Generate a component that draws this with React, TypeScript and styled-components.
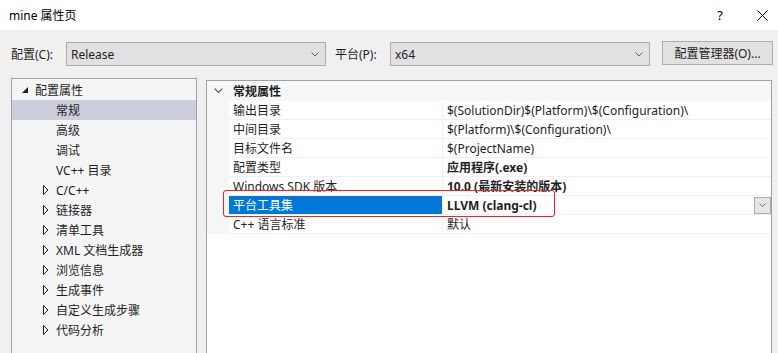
import styled, { createGlobalStyle } from "styled-components";

const GlobalStyle = createGlobalStyle`
  html, body {
    margin: 0;
    padding: 0;
    background: #f0f0f0;
  }
  * {
    box-sizing: border-box;
  }
`;

const FONT = `"Segoe UI", "Noto Sans", "Noto Sans CJK SC", sans-serif`;

const Window = styled.div`
  width: 778px;
  height: 353px;
  overflow: hidden;
  background: #f0f0f0;
  font-family: ${FONT};
  font-size: 12px;
  color: #1e1e1e;
  display: flex;
  flex-direction: column;
`;

const TitleBar = styled.div`
  height: 30px;
  flex-shrink: 0;
  background: #ffffff;
  display: flex;
  align-items: center;
  justify-content: space-between;
  padding: 0 10px 0 9px;
  font-size: 12px;
  color: #000;
`;

const TitleButtons = styled.div`
  display: flex;
  align-items: center;
  gap: 34px;
  height: 100%;
`;

const TitleButton = styled.div`
  height: 100%;
  display: flex;
  align-items: center;
  justify-content: center;
  font-size: 13px;
  color: #000;
`;

const Toolbar = styled.div`
  display: flex;
  align-items: center;
  height: 24px;
  margin-top: 12px;
  padding-left: 11px;
`;

const FieldLabel = styled.span<{ $width: number }>`
  width: ${(p) => p.$width}px;
  flex-shrink: 0;
`;

const Combo = styled.div<{ $gap?: number }>`
  width: 260px;
  height: 24px;
  margin-right: ${(p) => p.$gap ?? 0}px;
  background: #e1e1e1;
  border: 1px solid #adadad;
  display: flex;
  align-items: center;
  justify-content: space-between;
  padding: 0 6px 0 4px;
`;

const Button = styled.div`
  width: 111px;
  height: 24px;
  margin-top: -2px;
  background: #e1e1e1;
  border: 1px solid #adadad;
  display: flex;
  align-items: center;
  justify-content: center;
`;

const Body = styled.div`
  flex: 1;
  display: flex;
  align-items: flex-start;
  gap: 9px;
  padding: 12px 6px 0 11px;
  min-height: 0;
`;

const Tree = styled.div`
  width: 186px;
  height: 290px;
  background: #f5f5f5;
  border: 1px solid #a0a0a0;
  padding-top: 1px;
  display: flex;
  flex-direction: column;
`;

const TreeRow = styled.div<{ $level: number; $selected?: boolean }>`
  height: 20px;
  display: flex;
  align-items: center;
  padding-left: ${(p) => (p.$level === 0 ? 10 : 31)}px;
  background: ${(p) => (p.$selected ? "#cccedb" : "transparent")};
  color: #1e1e1e;
`;

const Expander = styled.span`
  width: 13px;
  height: 20px;
  display: flex;
  align-items: center;
  flex-shrink: 0;
`;

const Grid = styled.div`
  position: relative;
  flex: 1;
  height: 290px;
  margin-top: 2px;
  background: #ffffff;
  border: 1px solid #a0a0a0;
  display: flex;
  flex-direction: column;
`;

const GroupHeader = styled.div`
  height: 20px;
  display: flex;
  align-items: center;
  background: #f5f6f7;
  font-weight: bold;
  color: #1e1e1e;
`;

const GroupTitle = styled.span`
  padding-left: 4px;
`;

const Gutter = styled.div`
  width: 22px;
  height: 100%;
  flex-shrink: 0;
  display: flex;
  align-items: center;
  justify-content: center;
  background: #f5f6f7;
`;

const PropRow = styled.div`
  height: 19px;
  display: flex;
  align-items: stretch;
`;

const PropName = styled.div<{ $selected?: boolean }>`
  width: 214px;
  flex-shrink: 0;
  display: flex;
  align-items: center;
  padding-left: 4px;
  border-bottom: 1px solid #f0f0f0;
  border-right: 1px solid #f0f0f0;
  background: ${(p) => (p.$selected ? "#0078d7" : "#ffffff")};
  color: ${(p) => (p.$selected ? "#ffffff" : "#1e1e1e")};
  white-space: nowrap;
`;

const PropValue = styled.div<{ $bold?: boolean }>`
  flex: 1;
  display: flex;
  align-items: center;
  justify-content: space-between;
  padding-left: 4px;
  border-bottom: 1px solid #f0f0f0;
  font-weight: ${(p) => (p.$bold ? "bold" : "normal")};
  white-space: nowrap;
`;

const DropButton = styled.div`
  width: 17px;
  height: 17px;
  background: #e5e5e5;
  border: 1px solid #adadad;
  display: flex;
  align-items: center;
  justify-content: center;
`;

const Highlight = styled.div`
  position: absolute;
  left: 16px;
  top: 109px;
  width: 332px;
  height: 27px;
  border: 1px solid #e3242b;
  border-radius: 3px;
  pointer-events: none;
`;

const Chevron = ({ size = 8, color = "#606060" }: { size?: number; color?: string }) => (
  <svg width={size} height={size / 2 + 1} viewBox="0 0 8 5">
    <path d="M0.5 0.5 L4 4 L7.5 0.5" fill="none" stroke={color} strokeWidth="1" />
  </svg>
);

const CloseIcon = () => (
  <svg width="11" height="11" viewBox="0 0 11 11">
    <path d="M0.5 0.5 L10.5 10.5 M10.5 0.5 L0.5 10.5" stroke="#000" strokeWidth="1" />
  </svg>
);

const OpenTriangle = () => (
  <svg width="6" height="6" viewBox="0 0 6 6">
    <path d="M6 0 L6 6 L0 6 Z" fill="#1e1e1e" />
  </svg>
);

const ClosedTriangle = () => (
  <svg width="6" height="10" viewBox="0 0 6 10">
    <path d="M0.5 0.5 L5 5 L0.5 9.5 Z" fill="none" stroke="#1e1e1e" strokeWidth="1" />
  </svg>
);

const treeItems: { label: string; level: number; expandable?: boolean; open?: boolean; selected?: boolean }[] = [
  { label: "配置属性", level: 0, expandable: true, open: true },
  { label: "常规", level: 1, selected: true },
  { label: "高级", level: 1 },
  { label: "调试", level: 1 },
  { label: "VC++ 目录", level: 1 },
  { label: "C/C++", level: 1, expandable: true },
  { label: "链接器", level: 1, expandable: true },
  { label: "清单工具", level: 1, expandable: true },
  { label: "XML 文档生成器", level: 1, expandable: true },
  { label: "浏览信息", level: 1, expandable: true },
  { label: "生成事件", level: 1, expandable: true },
  { label: "自定义生成步骤", level: 1, expandable: true },
  { label: "代码分析", level: 1, expandable: true },
];

const props: { name: string; value: string; bold?: boolean; selected?: boolean }[] = [
  { name: "输出目录", value: "$(SolutionDir)$(Platform)\\$(Configuration)\\" },
  { name: "中间目录", value: "$(Platform)\\$(Configuration)\\" },
  { name: "目标文件名", value: "$(ProjectName)" },
  { name: "配置类型", value: "应用程序(.exe)", bold: true },
  { name: "Windows SDK 版本", value: "10.0 (最新安装的版本)", bold: true },
  { name: "平台工具集", value: "LLVM (clang-cl)", bold: true, selected: true },
  { name: "C++ 语言标准", value: "默认" },
];

export default function App() {
  return (
    <>
      <GlobalStyle />
      <Window>
        <TitleBar>
          <span>mine 属性页</span>
          <TitleButtons>
            <TitleButton>?</TitleButton>
            <TitleButton>
              <CloseIcon />
            </TitleButton>
          </TitleButtons>
        </TitleBar>

        <Toolbar>
          <FieldLabel $width={55}>配置(C):</FieldLabel>
          <Combo $gap={9}>
            <span>Release</span>
            <Chevron />
          </Combo>
          <FieldLabel $width={55}>平台(P):</FieldLabel>
          <Combo $gap={12}>
            <span>x64</span>
            <Chevron />
          </Combo>
          <Button>配置管理器(O)...</Button>
        </Toolbar>

        <Body>
          <Tree>
            {treeItems.map((item, i) => (
              <TreeRow key={i} $level={item.level} $selected={item.selected}>
                <Expander>
                  {item.expandable && (item.open ? <OpenTriangle /> : <ClosedTriangle />)}
                </Expander>
                <span>{item.label}</span>
              </TreeRow>
            ))}
          </Tree>

          <Grid>
            <GroupHeader>
              <Gutter>
                <Chevron size={9} color="#505050" />
              </Gutter>
              <GroupTitle>常规属性</GroupTitle>
            </GroupHeader>
            {props.map((p, i) => (
              <PropRow key={i}>
                <Gutter />
                <PropName $selected={p.selected}>{p.name}</PropName>
                <PropValue $bold={p.bold}>
                  <span>{p.value}</span>
                  {p.selected && (
                    <DropButton>
                      <Chevron size={7} />
                    </DropButton>
                  )}
                </PropValue>
              </PropRow>
            ))}
            <Highlight />
          </Grid>
        </Body>
      </Window>
    </>
  );
}
